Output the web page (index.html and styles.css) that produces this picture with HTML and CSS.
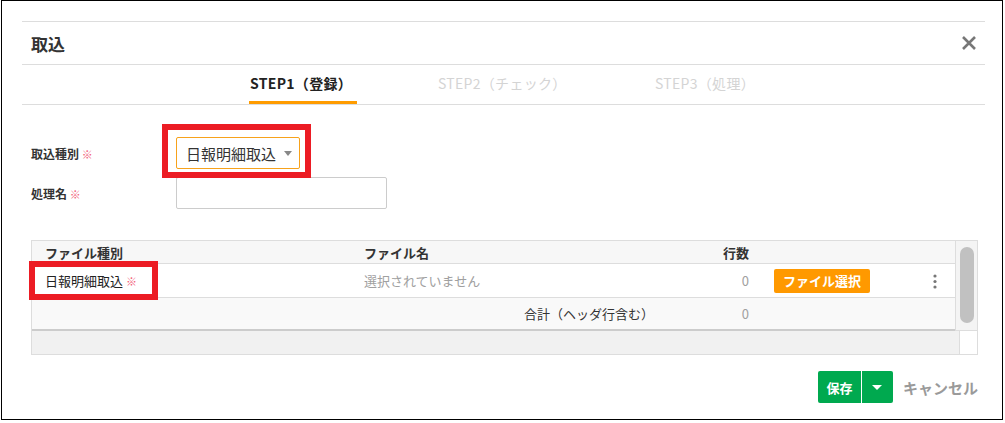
FILE: index.html
```html
<!DOCTYPE html>
<html>
  <head>
    <meta charset="utf-8" />
    <title>取込</title>
    <link rel="stylesheet" href="styles.css">
  </head>
  <body>
    <div class="frame">
      <div class="dialog">
        <div class="dlg-head">
          <span class="dlg-title">取込</span>
          <svg class="close" width="16" height="16" viewBox="0 0 16 16">
            <path d="M2 2 L14 14 M14 2 L2 14" stroke="#777" stroke-width="2.6" />
          </svg>
        </div>

        <div class="steps">
          <div class="step active s1">STEP1（登録）</div>
          <div class="step s2">STEP2（チェック）</div>
          <div class="step s3">STEP3（処理）</div>
        </div>

        <div class="form">
          <div class="form-row">
            <div class="label">取込種別 <span class="req">※</span></div>
            <div class="pick">
              <div class="select">日報明細取込<span class="caret"></span></div>
              <div class="mark mark-select"></div>
            </div>
          </div>
          <div class="form-row">
            <div class="label">処理名 <span class="req">※</span></div>
            <div class="input"></div>
          </div>
        </div>

        <div class="grid">
          <div class="grid-main">
            <div class="grid-body">
              <div class="row head">
                <div class="c1">ファイル種別</div>
                <div class="c2">ファイル名</div>
                <div class="c3">行数</div>
                <div class="c4"></div>
                <div class="c5"></div>
              </div>
              <div class="row item">
                <div class="c1 kind">日報明細取込&nbsp;<span class="req">※</span>
                  <div class="mark mark-row"></div>
                </div>
                <div class="c2 muted">選択されていません</div>
                <div class="c3 muted">0</div>
                <div class="c4"><span class="btn-file">ファイル選択</span></div>
                <div class="c5">
                  <svg width="4" height="16" viewBox="0 0 4 16">
                    <circle cx="2" cy="3" r="1.6" fill="#777" />
                    <circle cx="2" cy="8.5" r="1.6" fill="#777" />
                    <circle cx="2" cy="14" r="1.6" fill="#777" />
                  </svg>
                </div>
              </div>
              <div class="row total">
                <div class="c12">合計（ヘッダ行含む）</div>
                <div class="c3 muted">0</div>
                <div class="c4"></div>
                <div class="c5"></div>
              </div>
            </div>
            <div class="vscroll"><div class="thumb"></div></div>
          </div>
          <div class="hscroll">
            <div class="track"></div>
            <div class="corner"></div>
          </div>
        </div>

        <div class="foot">
          <div class="btn-save">
            <span class="save-main">保存</span>
            <span class="save-drop"><span class="caret-w"></span></span>
          </div>
          <span class="cancel">キャンセル</span>
        </div>
      </div>
    </div>
  </body>
</html>
```

FILE: styles.css
```css
body {
  margin: 0;
  background: #fff;
  font-family: "Noto Sans CJK JP", "Noto Sans", sans-serif;
  color: #333;
}
.frame {
  margin-left: 1px;
  width: 1000px;
  height: 418px;
  border: 1px solid #000;
}
.dialog {
  margin: 20px 0 0 20px;
  width: 963px;
}

/* header */
.dlg-head {
  display: flex;
  align-items: center;
  justify-content: space-between;
  height: 42px;
  border-top: 1px solid #ddd;
  border-bottom: 1px solid #ddd;
  padding: 0 8px 0 9px;
}
.dlg-title {
  font-size: 17px;
  font-weight: bold;
  color: #333;
}

/* steps */
.steps {
  display: flex;
  height: 39px;
  padding-left: 227px;
  gap: 80px;
  border-bottom: 1px solid #ddd;
}
.step {
  display: flex;
  align-items: center;
  box-sizing: border-box;
  height: 39px;
  padding: 0 1px;
  font-size: 14px;
  color: #d4d4d4;
  border-bottom: 3px solid transparent;
  letter-spacing: 0.3px;
}
.step.active {
  color: #222;
  font-weight: bold;
  border-bottom-color: #ff9c00;
}
.s1 { width: 108px; }
.s2 { width: 137px; }

/* form */
.form {
  display: flex;
  flex-direction: column;
  gap: 8px;
  padding: 32px 0 0 9px;
}
.form-row {
  display: flex;
  align-items: center;
}
.label {
  width: 145px;
  font-size: 12px;
  font-weight: bold;
  color: #333;
}
.req {
  color: #f2607a;
  font-weight: normal;
  font-size: 11px;
}
.pick {
  position: relative;
}
.select {
  box-sizing: border-box;
  width: 124px;
  height: 32px;
  border: 1px solid #f7a21b;
  border-radius: 2px;
  padding: 0 7px 0 9px;
  display: flex;
  align-items: center;
  justify-content: space-between;
  font-size: 15px;
  color: #333;
}
.caret {
  width: 0;
  height: 0;
  border-left: 4px solid transparent;
  border-right: 4px solid transparent;
  border-top: 5px solid #888;
}
.input {
  box-sizing: border-box;
  width: 211px;
  height: 32px;
  border: 1px solid #ccc;
  border-radius: 2px;
}
.mark {
  position: absolute;
  border: 6px solid #ec1c24;
}
.mark-select {
  top: -13px;
  left: -14px;
  right: -11px;
  bottom: -9px;
}
.mark-row {
  top: -3px;
  left: -3px;
  width: 117px;
  height: 27px;
}

/* grid */
.grid {
  margin: 31px 7px 0 9px;
  border: 1px solid #ddd;
  font-size: 13px;
}
.grid-main {
  display: flex;
}
.grid-body {
  flex: 1;
  border-bottom: 2px solid #ccc;
}
.row {
  display: grid;
  grid-template-columns: 319px 314px 97px 154px 1fr;
  align-items: center;
}
.row > div {
  box-sizing: border-box;
}
.head {
  height: 22px;
  background: #f7f7f7;
  border-bottom: 1px solid #ddd;
  font-weight: bold;
  color: #333;
}
.item {
  height: 33px;
  background: #fff;
  border-bottom: 1px solid #ddd;
}
.total {
  height: 31px;
  background: #f9f9f9;
  grid-template-columns: 633px 97px 154px 1fr;
}
.c1, .c2 {
  padding-left: 13px;
}
.c12 {
  text-align: right;
  padding-right: 11px;
  color: #333;
}
.c3 {
  text-align: right;
  padding-right: 13px;
}
.c4 {
  padding-left: 12px;
}
.c5 {
  display: flex;
  justify-content: center;
  padding-right: 2px;
}
.kind {
  position: relative;
  align-self: stretch;
  display: flex;
  align-items: center;
  color: #222;
}
.muted {
  color: #a0a0a0;
}
.btn-file {
  display: inline-flex;
  align-items: center;
  justify-content: center;
  width: 96px;
  height: 24px;
  background: #ff9900;
  border-radius: 2px;
  color: #fff;
  font-weight: bold;
  font-size: 13px;
}
.vscroll {
  box-sizing: border-box;
  width: 22px;
  border-left: 1px solid #ddd;
  border-bottom: 1px solid #ddd;
  background: #f4f4f4;
  padding: 6px 3px 5px 4px;
}
.thumb {
  width: 14px;
  height: 76px;
  border-radius: 7px;
  background: #c1c1c1;
}
.hscroll {
  display: flex;
  height: 23px;
}
.track {
  flex: 1;
  background: #f1f1f1;
}
.corner {
  width: 17px;
  border-left: 1px solid #ddd;
  background: #fff;
}

/* footer */
.foot {
  display: flex;
  justify-content: flex-end;
  align-items: center;
  gap: 10px;
  margin-top: 16px;
  padding-right: 7px;
}
.btn-save {
  display: flex;
  height: 32px;
  background: #00a94f;
  border-radius: 2px;
  color: #fff;
  font-weight: bold;
  font-size: 13px;
}
.save-main {
  display: flex;
  align-items: center;
  justify-content: center;
  width: 43px;
  border-right: 1px solid #fff;
}
.save-drop {
  display: flex;
  align-items: center;
  justify-content: center;
  width: 31px;
}
.caret-w {
  width: 0;
  height: 0;
  border-left: 5px solid transparent;
  border-right: 5px solid transparent;
  border-top: 5px solid #fff;
}
.cancel {
  font-size: 15px;
  font-weight: bold;
  color: #9a9a9a;
}
```
